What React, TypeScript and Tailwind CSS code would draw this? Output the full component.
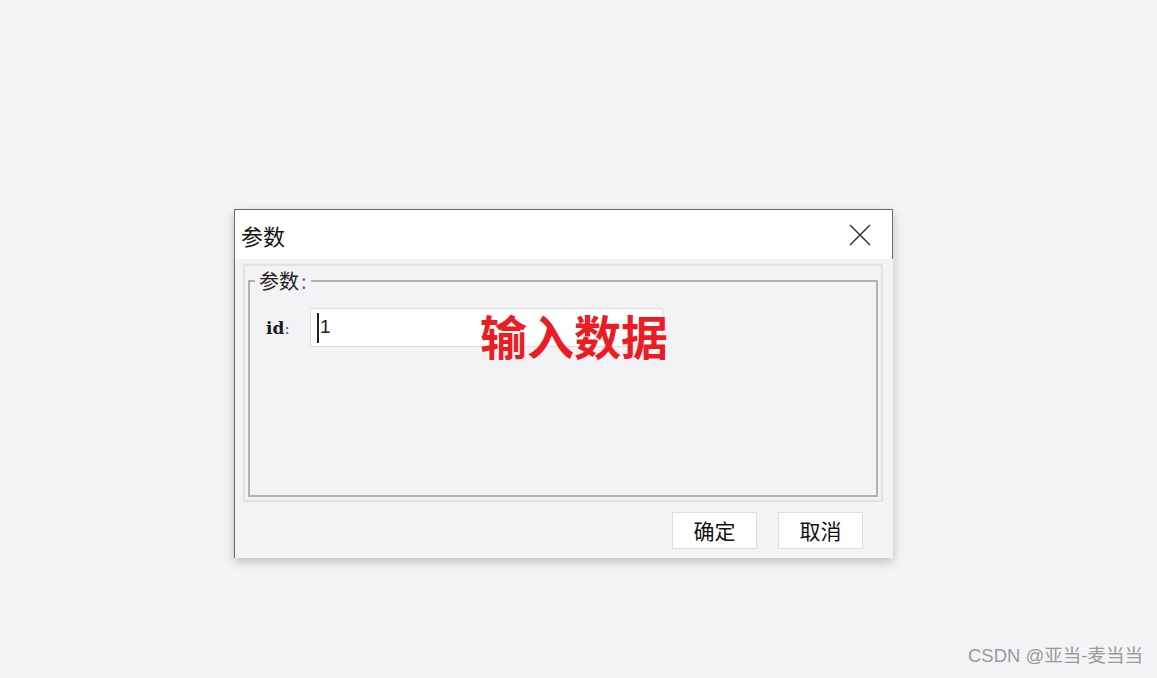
const cjk = "font-['Noto_Sans_CJK_SC','Microsoft_YaHei',sans-serif]";

const CloseIcon = () => (
  <svg width="22" height="22" viewBox="0 0 22 22" className="block">
    <path d="M1 1 L21 21 M21 1 L1 21" stroke="#2b2b2b" strokeWidth="1.4" fill="none" />
  </svg>
);

const App = () => {
  return (
    <div className={`relative h-[678px] w-[1157px] overflow-hidden bg-[#f4f4f6] pl-[234px] pt-[209px] ${cjk}`}>
      <div className="w-[659px] border-l border-t border-[#6b6b6b] bg-[#f3f3f5] shadow-[0_4px_10px_rgba(0,0,0,0.22)]">
        {/* title bar */}
        <div className="flex h-[49px] w-[658px] items-center justify-between border-r border-[#6b6b6b] bg-white pl-[6px] pr-[21px]">
          <span className="text-[22px] leading-none text-[#111]">参数</span>
          <CloseIcon />
        </div>

        {/* body */}
        <div className="px-[8px] pt-[5px]">
          <div className="w-[640px] border-2 border-[#e2e2e4] px-[3px] pb-[3px]">
            <fieldset className="mt-[3px] h-[228px] border-2 border-[#b2b2a6] pl-[16px]">
              <legend className="ml-[-11px] px-[4px] text-[20px] leading-[24px] text-[#222]">
                参数<span className="ml-[2px] text-[#8a5aa0]">:</span>
              </legend>
              <div className="mt-[15px] flex items-start">
                <span className="mt-[8px] w-[44px] font-['DejaVu_Serif',serif] text-[17px] font-bold text-[#1a1a1a]">
                  id<span className="font-normal text-[#7a5a9a]">:</span>
                </span>
                <div className="flex h-[39px] w-[353px] items-center border border-[#dcdcdc] bg-white pl-[6px]">
                  <span className="h-[30px] w-[2px] bg-[#222]" />
                  <span className="ml-[1px] font-['Liberation_Sans',sans-serif] text-[19px] text-[#222]">1</span>
                </div>
                <span className="relative z-10 ml-[-183px] mt-[3px] text-[47px] font-bold leading-none text-[#ec1c24]">
                  输入数据
                </span>
              </div>
            </fieldset>
          </div>
          <div className="flex justify-end gap-[21px] pb-[9px] pr-[22px] pt-[10px]">
            <button className="h-[37px] w-[85px] border border-[#dedede] bg-white text-[21px] leading-none text-[#111]">确定</button>
            <button className="h-[37px] w-[85px] border border-[#dedede] bg-white text-[21px] leading-none text-[#111]">取消</button>
          </div>
        </div>
      </div>

      <div className="absolute bottom-[8px] right-[14px] font-['Liberation_Sans','Noto_Sans_CJK_SC',sans-serif] text-[18.5px] text-[#9a9a9a]">
        CSDN @亚当-麦当当
      </div>
    </div>
  );
};

export default App;
